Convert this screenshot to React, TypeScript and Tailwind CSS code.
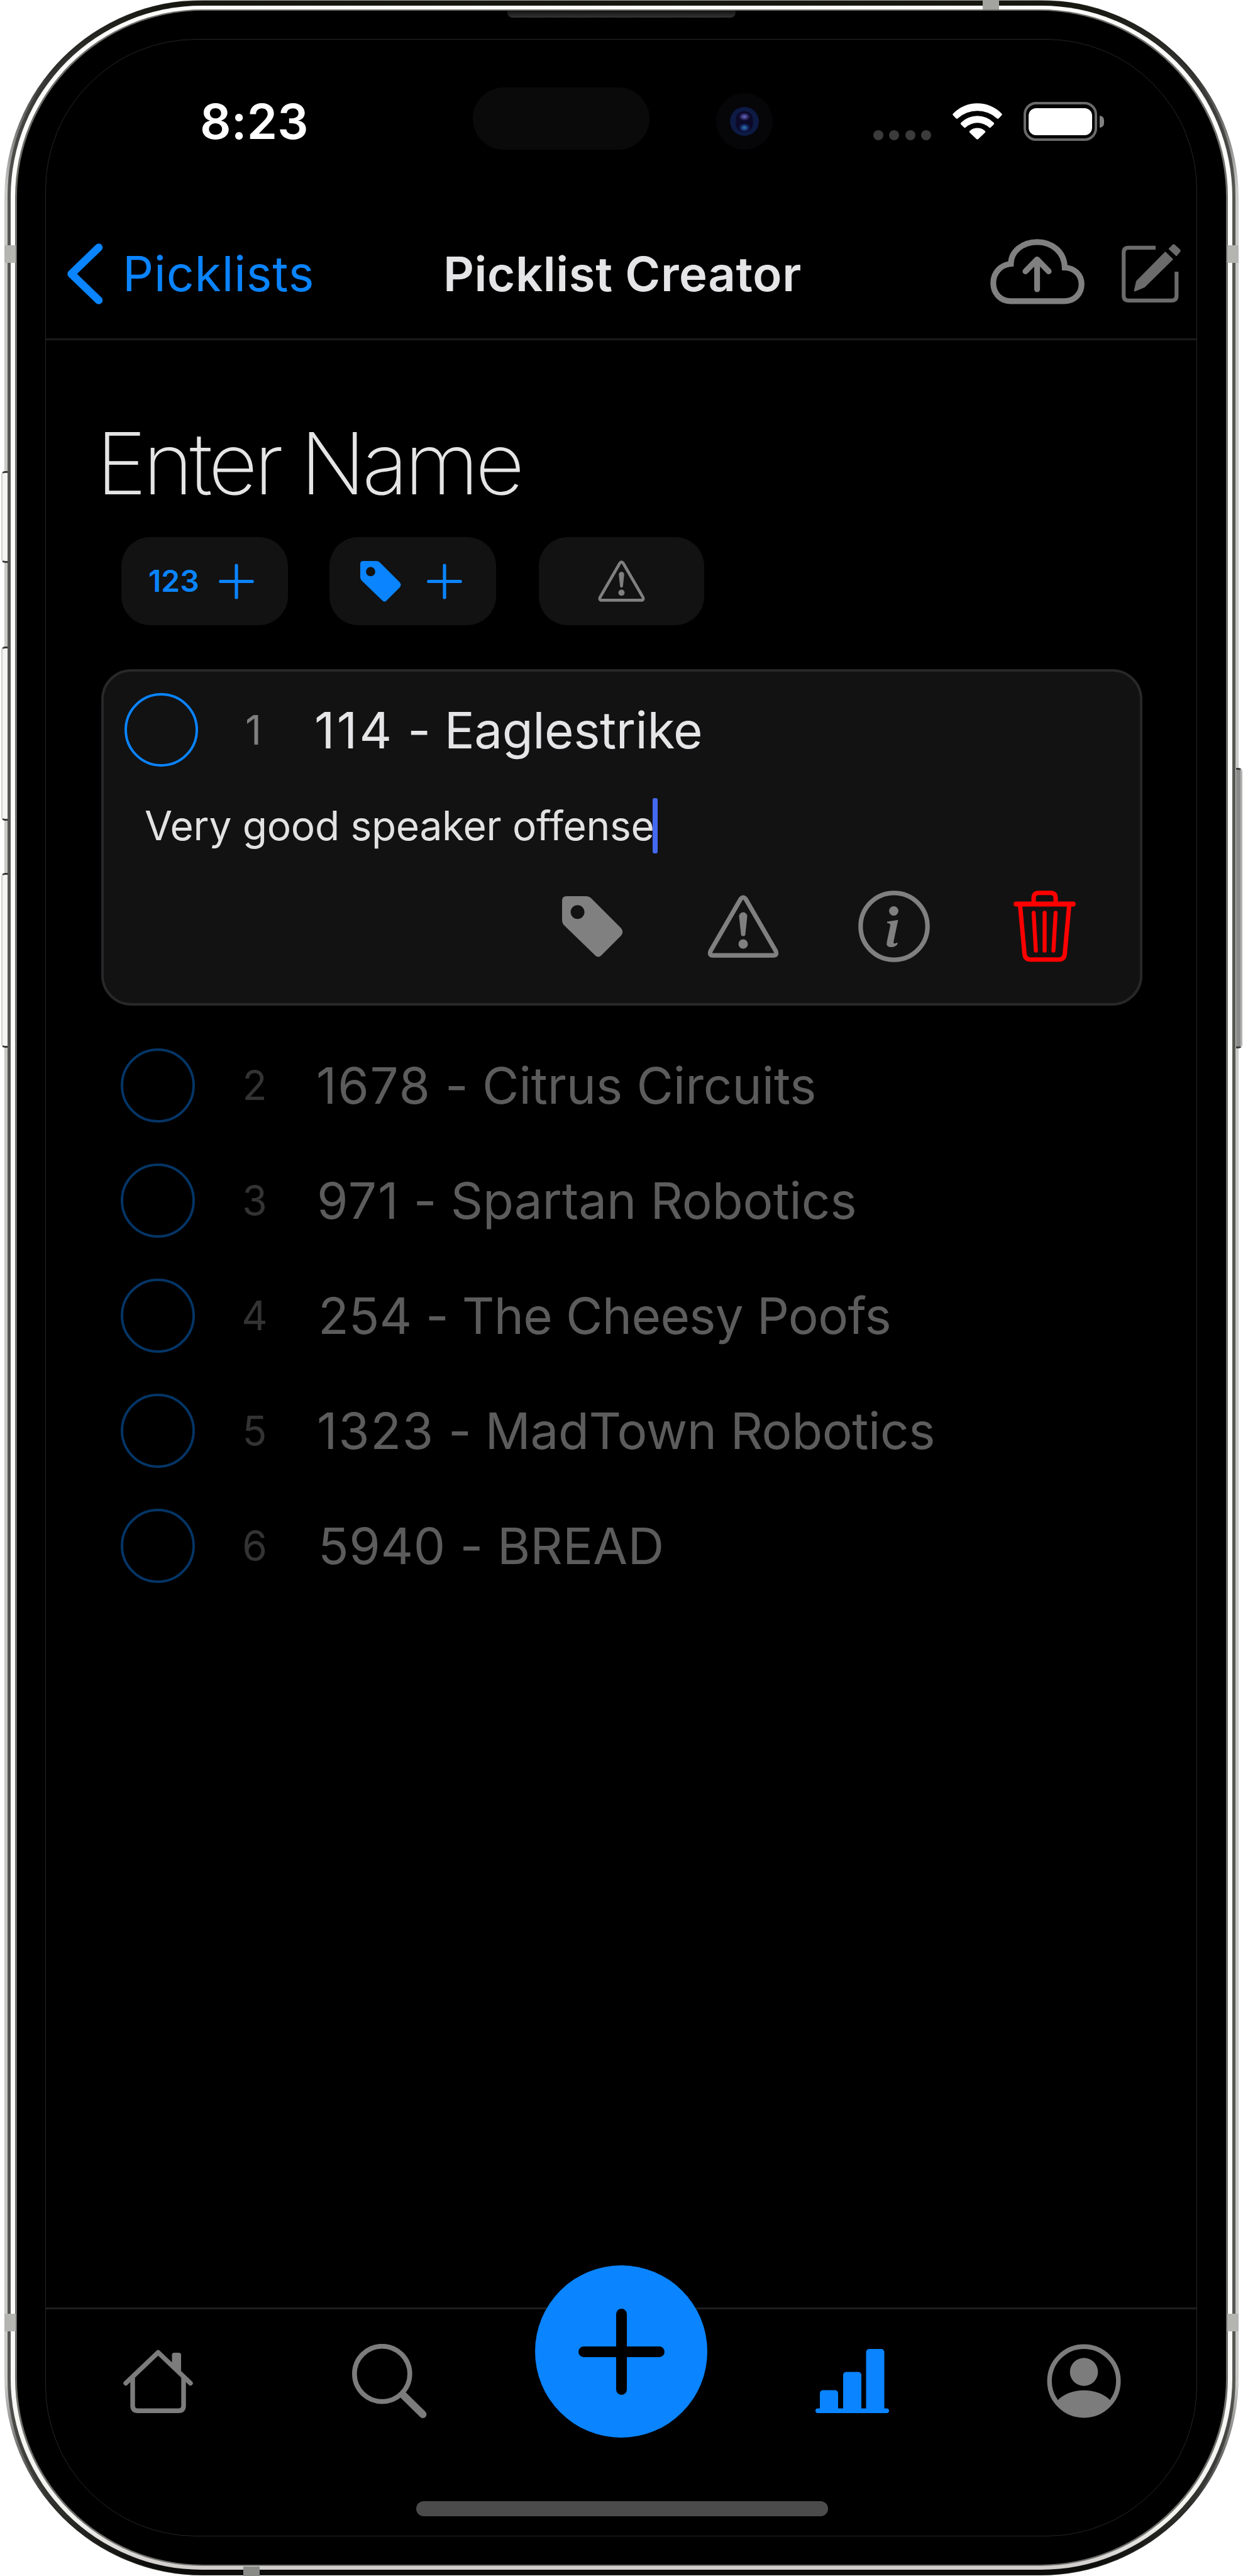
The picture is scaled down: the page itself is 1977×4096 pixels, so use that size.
import type { ReactNode } from "react";

type IconProps = { className?: string };

const TagIcon = ({ className }: IconProps) => (
  <svg viewBox="0 0 97 97" className={className} fill="currentColor">
    <path
      fillRule="evenodd"
      d="M7 0H38Q43 0 46.500 3.500L93.500 50.500Q99 57 93.500 63L62 94.500Q57.500 98.500 53 94.500L3.500 46.500Q0 43 0 38V7Q0 0 7 0ZM24.600 14.300a11 11 0 1 0 0 22a11 11 0 1 0 0-22Z"
    />
  </svg>
);

const WarningIcon = ({ className }: IconProps) => (
  <svg viewBox="0 0 114 100" className={className} fill="none">
    <path
      d="M53 6.500Q57 1.500 61 6.500L108.500 88.500Q112 96.200 104.500 96.200H9.500Q2 96.200 5.500 88.500Z"
      stroke="currentColor"
      strokeWidth="7.200"
      strokeLinejoin="round"
    />
    <path
      d="M50.500 34a6.500 6.500 0 0 1 13 0L60.500 62a3.500 3.500 0 0 1-7 0Z"
      fill="currentColor"
    />
    <circle cx="57" cy="78" r="7.500" fill="currentColor" />
  </svg>
);

const InfoIcon = ({ className }: IconProps) => (
  <svg viewBox="0 0 114 114" className={className} fill="none">
    <circle cx="57" cy="57" r="53.200" stroke="currentColor" strokeWidth="7.200" />
    <circle cx="56.500" cy="32.500" r="7.400" fill="currentColor" />
    <path
      d="M46 49.500L63.500 46.800L56 82.500Q56.500 86 61.500 82.800L63 84.200Q60 90 52 90Q44 90 45.500 82L51.200 55Q51 52 46 51.800Z"
      fill="currentColor"
    />
  </svg>
);

const TrashIcon = ({ className }: IconProps) => (
  <svg
    viewBox="0 0 99 114"
    className={className}
    fill="none"
    stroke="currentColor"
    strokeWidth="7"
    strokeLinecap="round"
    strokeLinejoin="round"
  >
    <path d="M4 21.500H95" strokeWidth="7.800" />
    <path d="M32 20V12Q32 3.800 40 3.800H59Q67 3.800 67 12V20" />
    <path d="M10.500 24L17.500 101Q18.500 109.800 27 109.800H72Q80.500 109.800 81.500 101L88.500 24" />
    <path d="M32 35.500L35.500 95.500M49.500 35.500V95.500M67 35.500L63.500 95.500" strokeWidth="6.400" />
  </svg>
);

const PlusIcon = ({ className }: IconProps) => (
  <svg viewBox="0 0 56 57" className={className} stroke="currentColor" strokeWidth="5.200" strokeLinecap="round">
    <path d="M28 3V54M2.800 28.500H53.200" />
  </svg>
);

const ChevronIcon = () => (
  <svg viewBox="0 0 58 97" className="h-[97px] w-[58px]" fill="none" stroke="#0a84ff" strokeWidth="12.500" strokeLinecap="round" strokeLinejoin="round">
    <path d="M51 6.500L7.500 48.500L51 90.500" />
  </svg>
);

const CloudIcon = () => (
  <svg viewBox="0 0 150 104" className="h-[104px] w-[150px]" fill="none" stroke="#808080" strokeWidth="9.200">
    <path d="M32 98.800C16 98.800 4.800 86 4.800 70C4.800 54 16 41 32.800 39.500C33 20 51 4.800 74.500 4.800C99 4.800 118 21 118.500 45.500C134 46 145.200 57 145.200 72C145.200 87 134 98.800 118 98.800Z" />
    <path d="M74.500 80V34M56 51.500L74.500 32.500L93 51.500" strokeLinecap="round" strokeLinejoin="round" />
  </svg>
);

const ComposeIcon = () => (
  <svg viewBox="0 0 95 94" className="h-[94px] w-[95px]" fill="none">
    <path d="M54 6.800H11Q3.200 6.800 3.200 14.500V83Q3.200 90.800 11 90.800H79.500Q87.300 90.800 87.300 83V45" stroke="#6b6b6b" strokeWidth="6.200" />
    <path d="M69.400 13L82 25.300L36.600 70L21.500 76.200Q19 76.800 19.800 74.500L23 60Z" fill="#6b6b6b" />
    <path d="M74.400 8.700L81 2Q82.600 .3 84.500 2L93 9.800Q94.500 11.600 93 13.500L87 20.500Z" fill="#6b6b6b" />
  </svg>
);

const WifiIcon = () => (
  <svg viewBox="0 0 79 58" className="h-[58px] w-[79px]" fill="#fff">
    <path d="M1 16.500A54 54 0 0 1 78 16.500Q79.500 18 78 19.500L73.500 24.200Q72 25.500 70.500 24.200A46 46 0 0 0 8.500 24.200Q7 25.500 5.500 24.200L1 19.500Q-.5 18 1 16.500Z" />
    <path d="M13.500 31A37 37 0 0 1 65.500 31Q67 32.500 65.500 34L60.800 38.500Q59.500 39.800 58 38.500A27.500 27.500 0 0 0 21 38.500Q19.500 39.800 18.200 38.500L13.500 34Q12 32.500 13.500 31Z" />
    <path d="M27.500 44A18.500 18.500 0 0 1 51.500 44Q53 45.500 51.500 47L41 57Q39.500 58.500 38 57L27.500 47Q26 45.500 27.500 44Z" />
  </svg>
);

const HomeIcon = () => (
  <svg viewBox="0 0 111 101" className="h-[101px] w-[111px]" fill="none" stroke="#7c7c7c" strokeWidth="7.400" strokeLinecap="round" strokeLinejoin="round">
    <path d="M4 53.500L55.500 4.500L107 53.500" />
    <path d="M15 45V89Q15 97.200 23 97.200H88Q96 97.200 96 89V45" />
    <path d="M77.500 8.500Q77.500 5 81 5H88.500Q92 5 92 8.500V38L77.500 24Z" fill="#7c7c7c" stroke="none" />
  </svg>
);

const SearchIcon = () => (
  <svg viewBox="0 0 119 118" className="h-[118px] w-[119px]" fill="none" stroke="#7c7c7c" strokeLinecap="round">
    <circle cx="47.800" cy="47.600" r="44" strokeWidth="7.600" />
    <path d="M82 82L112.500 112" strokeWidth="11.800" />
  </svg>
);

const ChartIcon = () => (
  <svg viewBox="0 0 117 102" className="h-[102px] w-[117px]" fill="#0a84ff">
    <rect x="0" y="94.500" width="117" height="7.500" rx="3.700" />
    <path d="M7 98V71Q7 65.500 12.500 65.500H30.500Q36 65.500 36 71V98Z" />
    <path d="M44 98V42Q44 36.500 49.500 36.500H67.500Q73 36.500 73 42V98Z" />
    <path d="M80.500 98V5.500Q80.500 0 86 0H104Q109.500 0 109.500 5.500V98Z" />
  </svg>
);

const ProfileIcon = () => (
  <svg viewBox="0 0 118 118" className="h-[118px] w-[118px]" fill="#7c7c7c">
    <circle cx="59" cy="59" r="54.800" fill="none" stroke="#7c7c7c" strokeWidth="7.400" />
    <circle cx="59" cy="44.500" r="22.300" />
    <path d="M17 90C26 80 42 73.800 59 73.800C76 73.800 92 80 101 90C91 105 76 114 59 114C42 114 27 105 17 90Z" />
  </svg>
);

const SideBand = ({ className }: IconProps) => (
  <div className={`absolute h-[28px] w-[18px] bg-[#b4b4b1] ${className ?? ""}`} />
);

const SideButton = ({ className }: IconProps) => (
  <div className={`absolute border-y-[3px] border-y-[#3a3a38] ${className ?? ""}`} />
);

const Chip = ({ className, children }: { className: string; children: ReactNode }) => (
  <div className={`flex h-[140px] items-center rounded-[46px] bg-[#121212] ${className}`}>{children}</div>
);

const teams = [
  { rank: 2, number: "1678", name: " - Citrus Circuits", indent: "ml-[3px]", digits: "tracking-[1.7px]", letters: "tracking-[-0.1px]" },
  { rank: 3, number: "971", name: " - Spartan Robotics", indent: "ml-[4px]", digits: "tracking-[1.8px]", letters: "tracking-[-0.1px]" },
  { rank: 4, number: "254", name: " - The Cheesy Poofs", indent: "ml-[6px]", digits: "tracking-[0px]", letters: "tracking-[-0.7px]" },
  { rank: 5, number: "1323", name: " - MadTown Robotics", indent: "ml-[4px]", digits: "tracking-[1.7px]", letters: "tracking-[-0.4px]" },
  { rank: 6, number: "5940", name: " - BREAD", indent: "ml-[6px]", digits: "tracking-[0.6px]", letters: "tracking-[0.1px]" },
];

function StatusBar() {
  return (
    <div className="flex h-[260px] shrink-0 items-center pl-[245px]">
      <div className="w-[434px] pt-[2px] text-[77.500px] leading-none font-semibold tracking-[0.2px] text-white">8:23</div>
      <div className="relative -top-[5px] h-[99px] w-[281px] rounded-full bg-[#0a0a0a]" />
      <div className="ml-[106px] flex h-[90px] w-[90px] items-center justify-center rounded-full bg-[#060508]">
        <svg viewBox="0 0 48 48" className="h-[48px] w-[48px]">
          <defs>
            <radialGradient id="glowTop">
              <stop offset="0" stopColor="#6a68c8" />
              <stop offset="1" stopColor="#0c0828" />
            </radialGradient>
            <radialGradient id="glowBottom">
              <stop offset="0" stopColor="#3f7f9a" />
              <stop offset="0.500" stopColor="#153a80" />
              <stop offset="1" stopColor="#0c0828" />
            </radialGradient>
          </defs>
          <circle cx="24" cy="24" r="23" fill="#0d1a44" />
          <rect x="10.500" y="8" width="27" height="33" rx="13" fill="#0c0828" />
          <ellipse cx="24" cy="16.500" rx="9" ry="6.500" fill="url(#glowTop)" />
          <ellipse cx="24" cy="34" rx="9" ry="7" fill="url(#glowBottom)" />
        </svg>
      </div>
      <div className="mt-[43px] ml-[160px] flex gap-[9.300px]">
        {[0, 1, 2, 3].map((dot) => (
          <div key={dot} className="h-[16px] w-[16px] rounded-full bg-[#3b3b3b]" />
        ))}
      </div>
      <div className="ml-[34px]">
        <WifiIcon />
      </div>
      <div className="ml-[34px] flex h-[62px] w-[117px] items-center justify-center rounded-[20px] border-[4px] border-[#6b6b6b]">
        <div className="h-[43px] w-[101px] rounded-[12px] bg-white" />
      </div>
      <div className="ml-[4px] h-[19px] w-[7px] rounded-r-full bg-[#808080]" />
    </div>
  );
}

function NavBar() {
  return (
    <div className="flex h-[218px] shrink-0 items-center border-b-[3px] border-[#1a1a1c] pt-[9px] pr-[24px] pl-[33px]">
      <div className="flex w-[599px] items-center text-[77px] leading-none tracking-[0.9px] text-[#0a84ff]">
        <ChevronIcon />
        <span className="ml-[31px]">Picklists</span>
      </div>
      <div className="text-[76px] leading-none font-semibold tracking-[0.6px] whitespace-nowrap text-[#e5e5e7]">
        Picklist Creator
      </div>
      <div className="-mt-[7px] ml-auto flex items-center gap-[59px]">
        <CloudIcon />
        <div className="pt-[5px]">
          <ComposeIcon />
        </div>
      </div>
    </div>
  );
}

function SelectedCard() {
  return (
    <div className="mt-[70px] ml-[88px] h-[535px] w-[1656px] rounded-[48px] border-[4px] border-[#28282a] bg-[#121212] pt-[34px] pl-[33px]">
      <div className="flex h-[117px] items-center">
        <div className="h-[117px] w-[117px] rounded-full border-[4px] border-[#0a84ff]" />
        <div className="w-[176px] text-center text-[64px] leading-none text-[#808080]">1</div>
        <div className="ml-[9px] text-[80px] leading-none tracking-[-0.5px] whitespace-pre text-[#e5e5e7]">
          <span className="tracking-[3.2px]">114</span>
          {" - Eaglestrike"}
        </div>
      </div>
      <div className="mt-[50px] ml-[32px] flex h-[88px] items-center">
        <div className="text-[64px] leading-none tracking-[-0.3px] whitespace-nowrap text-[#e2e2e2]">
          Very good speaker offense
        </div>
        <div className="-ml-[3px] h-[88px] w-[8px] rounded-[3px] bg-[#4468f0]" />
      </div>
      <div className="mt-[59px] flex h-[114px] items-center justify-end gap-[119.500px] pr-[92px] text-[#808080]">
        <div className="flex w-[120px] justify-center">
          <TagIcon className="h-[97px] w-[97px]" />
        </div>
        <div className="flex w-[120px] justify-center">
          <WarningIcon className="h-[100px] w-[114px]" />
        </div>
        <div className="flex w-[120px] justify-center">
          <InfoIcon className="h-[114px] w-[114px]" />
        </div>
        <div className="flex w-[120px] justify-center">
          <TrashIcon className="h-[114px] w-[99px] text-[#ff0000]" />
        </div>
      </div>
    </div>
  );
}

function TabBar() {
  return (
    <div className="relative mt-auto flex h-[363px] shrink-0 flex-col border-t-[3px] border-[#1f1f21] pt-[55px]">
      <div className="flex h-[118px] items-center gap-[248px] pl-[118.500px]">
        <div className="flex w-[120px] justify-center">
          <HomeIcon />
        </div>
        <div className="flex w-[120px] justify-center">
          <SearchIcon />
        </div>
        <div className="w-[120px]" />
        <div className="flex w-[120px] justify-center">
          <ChartIcon />
        </div>
        <div className="flex w-[120px] justify-center">
          <ProfileIcon />
        </div>
      </div>
      <div className="mt-[132px] ml-[589px] h-[24px] w-[655px] rounded-full bg-[#4b4b4b]" />
      <div className="absolute -top-[70px] left-[778px] flex h-[274px] w-[274px] items-center justify-center rounded-full bg-[#0a84ff]">
        <svg viewBox="0 0 137 137" className="h-[137px] w-[137px]" stroke="#000" strokeWidth="17" strokeLinecap="round">
          <path d="M68.500 8.500V128.500M8.500 68.500H128.500" />
        </svg>
      </div>
    </div>
  );
}

export default function App() {
  return (
    <div className="relative h-[4096px] w-[1977px] overflow-hidden bg-white px-[7px] pb-px font-['Inter',sans-serif]">
      <SideButton className="top-[749px] left-[2px] h-[146px] w-[10px] rounded-l-[6px] border-l-[2px] border-l-[#cfcfcd] bg-[#f3f3f1]" />
      <SideButton className="top-[1028px] left-[2px] h-[277px] w-[10px] rounded-l-[6px] border-l-[2px] border-l-[#cfcfcd] bg-[#f3f3f1]" />
      <SideButton className="top-[1388px] left-[2px] h-[278px] w-[10px] rounded-l-[6px] border-l-[2px] border-l-[#cfcfcd] bg-[#f3f3f1]" />
      <SideButton className="top-[1221px] right-[1px] h-[446px] w-[10px] rounded-r-[6px] border-r-[3px] border-r-[#b4b4b2] bg-[#8a8a88]" />

      <div className="h-[4095px] rounded-[315px] bg-[linear-gradient(to_bottom,#b8bdb4_0,#1d1d19_3px,#2a2a28_110px,#c9c9c7_300px,#c9c9c7_3790px,#2a2a28_3985px,#1d1d19_4094px)] px-[5px] py-px">
        <div className="h-full rounded-[311px] bg-[linear-gradient(to_bottom,#16160f_0,#2c2c28_80px,#565653_300px,#565653_3790px,#2c2c28_4000px,#0c0c0a_4080px)] px-[5px] py-[8px]">
          <div className="h-full rounded-[304px] bg-[linear-gradient(to_bottom,#fcfcfa_0,#fcfcfa_3600px,#f2f2ef_4000px,#cfccc9_4075px)] px-[7px] py-[6px]">
            <div className="h-full rounded-[298px] bg-[#6f6f6b] px-[3px] py-[2px]">
              <div className="h-full rounded-[296px] bg-black pt-[45px] pr-[46px] pb-[45px] pl-[45px]">
                <div className="flex h-full flex-col rounded-[240px] border border-[#262626]">
                  <StatusBar />
                  <NavBar />
                  <div className="flex flex-col pt-[116px]">
                    <div className="h-[160px] pl-[80px] text-[136px] leading-[160px] font-extralight tracking-[-5.700px] whitespace-nowrap text-[#e5e5e5]">
                      Enter Name
                    </div>
                    <div className="mt-[37px] flex gap-[66px] pl-[120px] text-[#0a84ff]">
                      <Chip className="w-[265px] pl-[43px]">
                        <div className="w-[112px] text-[48px] leading-none font-semibold">123</div>
                        <PlusIcon className="h-[57px] w-[56px]" />
                      </Chip>
                      <Chip className="w-[265px] pl-[49px]">
                        <TagIcon className="h-[65px] w-[65px]" />
                        <PlusIcon className="ml-[41px] h-[57px] w-[56px]" />
                      </Chip>
                      <Chip className="ml-[2px] w-[263px] justify-center text-[#808080]">
                        <WarningIcon className="h-[66px] w-[75px]" />
                      </Chip>
                    </div>
                    <SelectedCard />
                    <div className="mt-[68px] flex flex-col gap-[66.200px] pl-[119px]">
                      {teams.map((team) => (
                        <div key={team.rank} className="flex h-[117px] items-center">
                          <div className="h-[118px] w-[118px] shrink-0 rounded-full border-[4px] border-[#043566]" />
                          <div className="w-[190px] text-center text-[64px] leading-none text-[#333333]">{team.rank}</div>
                          <div className={`text-[80px] leading-none whitespace-pre text-[#5c5c5d] ${team.indent} ${team.letters}`}>
                            <span className={team.digits}>{team.number}</span>
                            {team.name}
                          </div>
                        </div>
                      ))}
                    </div>
                  </div>
                  <TabBar />
                </div>
              </div>
            </div>
          </div>
        </div>
      </div>

      <SideBand className="top-[390px] left-[7px]" />
      <SideBand className="top-[390px] right-[7px]" />
      <SideBand className="top-[3679px] left-[7px]" />
      <SideBand className="top-[3679px] right-[7px]" />
      <div className="absolute top-0 left-[1563px] h-[15px] w-[26px] bg-[#a3a3a0]" />
      <div className="absolute bottom-0 left-[387px] h-[15px] w-[26px] bg-[#8a8a87]" />
      <div className="absolute top-[17px] left-[807px] h-[11px] w-[363px] rounded-b-[8px] bg-linear-to-b from-[#141414] to-[#333333]" />
    </div>
  );
}
